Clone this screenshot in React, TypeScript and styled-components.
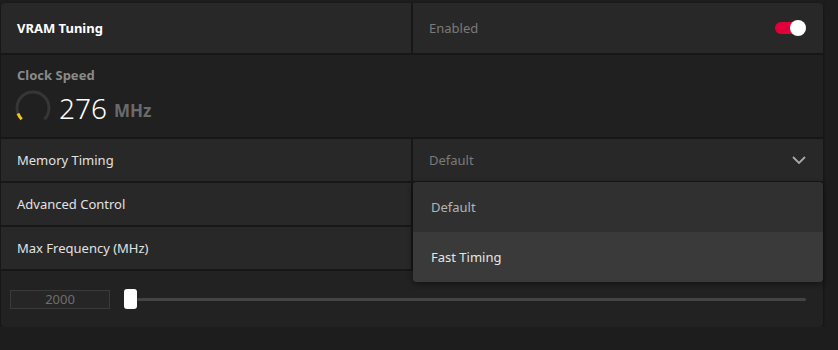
import React from "react"
import styled, { createGlobalStyle } from "styled-components"

const GlobalStyle = createGlobalStyle`
  html, body {
    margin: 0;
    padding: 0;
    background: #1d1d1d;
    font-family: "Noto Sans", "Open Sans", sans-serif;
    -webkit-font-smoothing: antialiased;
  }
`

const Page = styled.div`
  padding: 3px 0 0 1px;
  width: 822px;
`

const Card = styled.div`
  position: relative;
  display: flex;
  flex-direction: column;
  gap: 2px;
  background: #171717;
  border-radius: 4px;
  box-shadow: 0 1px 3px rgba(0, 0, 0, 0.5);
`

const Row = styled.div<{ $height: number }>`
  display: grid;
  grid-template-columns: 410px 410px;
  column-gap: 2px;
  height: ${p => p.$height}px;
`

const Cell = styled.div<{ $first?: boolean; $last?: boolean }>`
  display: flex;
  align-items: center;
  justify-content: space-between;
  padding: 0 17px 0 16px;
  background: #282828;
  border-top-left-radius: ${p => (p.$first ? "4px" : "0")};
  border-top-right-radius: ${p => (p.$last ? "4px" : "0")};
`

const Title = styled.span`
  color: #ffffff;
  font-size: 13px;
  font-weight: 700;
`

const Label = styled.span`
  color: #e2e2e2;
  font-size: 13px;
`

const Muted = styled.span`
  color: #7a7a7a;
  font-size: 13px;
`

const ClockPanel = styled.div`
  display: flex;
  flex-direction: column;
  height: 82px;
  padding: 11px 16px 0;
  box-sizing: border-box;
  background: #202020;
`

const ClockLabel = styled.span`
  color: #8a8a8a;
  font-size: 13px;
  font-weight: 700;
`

const ClockValue = styled.div`
  display: flex;
  align-items: center;
  gap: 8px;
  margin-top: 6px;
  margin-left: -2px;
`

const Number = styled.span`
  color: #ffffff;
  font-size: 28px;
  font-weight: 300;
  line-height: 36px;
`

const Unit = styled.span`
  color: #6a6a6a;
  font-size: 17px;
  font-weight: 700;
  margin-left: -1px;
  padding-top: 4px;
`

const Toggle = styled.div`
  position: relative;
  width: 31px;
  height: 12px;
  border-radius: 6px;
  background: #e2003a;
`

const Knob = styled.div`
  position: absolute;
  right: 0;
  top: -2px;
  width: 16px;
  height: 16px;
  border-radius: 50%;
  background: #ffffff;
`

const SliderArea = styled.div`
  display: flex;
  align-items: center;
  height: 56px;
  padding: 0 17px 0 9px;
  background: #222222;
  border-radius: 0 0 4px 4px;
`

const ValueBox = styled.div`
  width: 100px;
  height: 19px;
  box-sizing: border-box;
  border: 1px solid #3a3a3a;
  background: #262626;
  color: #6e6e6e;
  font-size: 13px;
  line-height: 17px;
  text-align: center;
`

const Thumb = styled.div`
  width: 13px;
  height: 20px;
  margin-left: 14px;
  border-radius: 3px;
  background: #ffffff;
`

const Track = styled.div`
  flex: 1;
  height: 3px;
  border-radius: 2px;
  background: #444444;
`

const Menu = styled.div`
  position: absolute;
  top: 179px;
  left: 412px;
  width: 410px;
  display: flex;
  flex-direction: column;
  background: #303030;
  border-radius: 4px;
  overflow: hidden;
  box-shadow: 0 2px 6px rgba(0, 0, 0, 0.45);
`

const MenuItem = styled.div<{ $active?: boolean }>`
  height: 50px;
  display: flex;
  align-items: center;
  padding-left: 18px;
  font-size: 13px;
  color: ${p => (p.$active ? "#e6e6e6" : "#b4b4b4")};
  background: ${p => (p.$active ? "#3a3a3a" : "#303030")};
`

const Gauge = () => (
  <svg width="36" height="36" viewBox="0 0 36 36">
    <path d="M6.7 29.3 A16 16 0 1 1 29.3 29.3" fill="none" stroke="#363636" strokeWidth="3" />
    <path d="M6.7 29.3 A16 16 0 0 1 3 23.5" fill="none" stroke="#f5c518" strokeWidth="3" />
  </svg>
)

const Chevron = () => (
  <svg width="14" height="8" viewBox="0 0 14 8">
    <path d="M1 1 L7 7 L13 1" fill="none" stroke="#a8a8a8" strokeWidth="1.8" />
  </svg>
)

const rows = ["Memory Timing", "Advanced Control", "Max Frequency (MHz)"]

const App = (): React.ReactElement => {
  return (
    <Page>
      <GlobalStyle />
      <Card>
        <Row $height={50}>
          <Cell $first>
            <Title>VRAM Tuning</Title>
          </Cell>
          <Cell $last>
            <Muted>Enabled</Muted>
            <Toggle>
              <Knob />
            </Toggle>
          </Cell>
        </Row>

        <ClockPanel>
          <ClockLabel>Clock Speed</ClockLabel>
          <ClockValue>
            <Gauge />
            <Number>276</Number>
            <Unit>MHz</Unit>
          </ClockValue>
        </ClockPanel>

        {rows.map((r, i) => (
          <Row key={r} $height={42}>
            <Cell>
              <Label>{r}</Label>
            </Cell>
            <Cell>
              {i === 0 && (
                <>
                  <Muted>Default</Muted>
                  <Chevron />
                </>
              )}
            </Cell>
          </Row>
        ))}

        <SliderArea>
          <ValueBox>2000</ValueBox>
          <Thumb />
          <Track />
        </SliderArea>

        <Menu>
          <MenuItem>Default</MenuItem>
          <MenuItem $active>Fast Timing</MenuItem>
        </Menu>
      </Card>
    </Page>
  )
}

export default App
